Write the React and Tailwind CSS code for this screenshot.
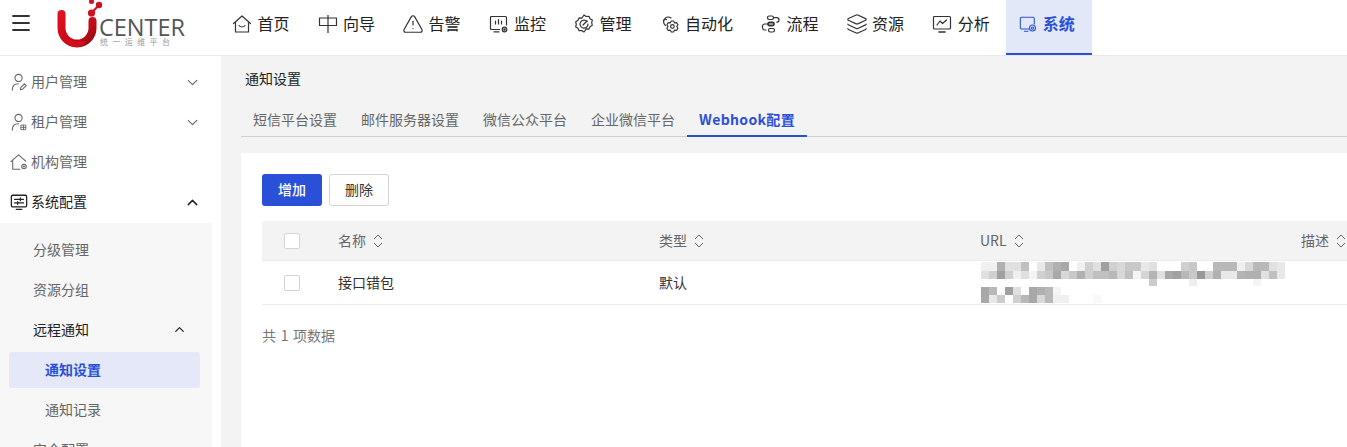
import { ChevronDown, ChevronUp, Menu, TriangleAlert, Layers } from 'lucide-react'

const cjk = '"Microsoft YaHei","Noto Sans CJK SC",sans-serif'

const Stroke = ({ children, className = '' }) => (
  <svg
    viewBox="0 0 20 20"
    fill="none"
    stroke="currentColor"
    strokeWidth="1.2"
    strokeLinecap="round"
    strokeLinejoin="round"
    className={className}
  >
    {children}
  </svg>
)

const HomeIcon = (p) => (
  <Stroke {...p}>
    <path d="M1.500 9.500 10 2l8.500 7.500" />
    <path d="M3.500 8.500V18h13V8.500" />
    <path d="M7 11.500c1.500 2 4.500 2 6 0" />
  </Stroke>
)
const GuideIcon = (p) => (
  <Stroke {...p}>
    <path d="M1.500 4h17v7.500h-17z" />
    <path d="M10 1.500V18.500" />
  </Stroke>
)
const MonitorIcon = (p) => (
  <Stroke {...p}>
    <path d="M10.500 15.500H2.500a1 1 0 0 1-1-1V3.500a1 1 0 0 1 1-1h14a1 1 0 0 1 1 1v7.500" />
    <path d="M6.500 10V7M9.500 10V5.500M12.500 10V7" />
    <path d="M5 17.800h5" />
    <circle cx="15.500" cy="15.500" r="2.300" />
    <circle cx="15.500" cy="15.500" r=".7" />
  </Stroke>
)
const ManageIcon = (p) => (
  <Stroke {...p}>
    <path d="M10 1.500l2.200 1.500 2.700-.2 1.100 2.400 2.300 1.400-.6 2.600.6 2.600-2.300 1.400-1.100 2.400-2.700-.2L10 18.500l-2.200-1.500-2.700.2L4 14.800l-2.300-1.400.6-2.600-.6-2.600L4 6.800l1.100-2.400 2.700.2z" transform="translate(0 -.5)" />
    <path d="M13 7.500A4 4 0 1 0 14 10" />
    <path d="M9 11l4-4" />
  </Stroke>
)
const AutoIcon = (p) => (
  <Stroke {...p}>
    <path d="M5.500 11.500A4.500 4.500 0 1 1 11 4" />
    <path d="M3.500 7a2 2 0 0 1 3-1.500" />
    <path d="M13.500 7l1 1.800 2.200-.1 1.200 2-1.100 1.800 1.100 1.800-1.200 2-2.200-.1-1 1.800h-2.200l-1-1.800-2.200.1-1.200-2 1.100-1.800-1.100-1.800 1.200-2 2.200.1 1-1.800z" />
    <circle cx="12.400" cy="12.500" r="1.800" />
  </Stroke>
)
const FlowIcon = (p) => (
  <Stroke {...p}>
    <rect x="6.500" y="2" width="6" height="3.500" rx="1.700" />
    <rect x="7" y="8.500" width="6" height="3" rx="1.500" strokeWidth="1.800" />
    <rect x="7.500" y="14.500" width="6" height="3.500" rx="1.700" />
    <path d="M13.500 3.700h2.300a2.200 2.200 0 0 1 0 4.400" />
    <path d="M6 10H3.800a2.300 2.300 0 0 0-2.300 2.300v1.500A2.300 2.300 0 0 0 3.800 16H5" />
  </Stroke>
)
const ChartIcon = (p) => (
  <Stroke {...p}>
    <rect x="1.500" y="2.500" width="17" height="12.500" rx="1" />
    <path d="M5 11l3-4 2.500 2.500L14.500 6" />
    <path d="M7 18h6" strokeWidth="1.600" />
  </Stroke>
)
const SystemIcon = (p) => (
  <Stroke {...p}>
    <path d="M11 15.500H3a1.500 1.500 0 0 1-1.500-1.500V4A1.500 1.500 0 0 1 3 2.500h12.500A1.500 1.500 0 0 1 17 4v6" />
    <path d="M6 18h4" />
    <circle cx="15" cy="14.500" r="3.300" />
    <circle cx="15" cy="14.500" r="1.200" />
  </Stroke>
)
const UserEdit = (p) => (
  <Stroke {...p}>
    <circle cx="9.500" cy="5.500" r="4" />
    <path d="M2.500 19c0-4.500 2.500-7 7-7" />
    <path d="M11.500 18.500l.5-2.500 4-4 2 2-4 4z" />
  </Stroke>
)
const UserTenant = (p) => (
  <Stroke {...p}>
    <circle cx="9.500" cy="5.500" r="4" />
    <path d="M2.500 19c0-4.500 2.500-7 7-7" />
    <path d="M12.500 13.500h5v5h-5zM15 13.500v5M12.500 16h5" strokeWidth="1" />
  </Stroke>
)
const OrgIcon = (p) => (
  <Stroke {...p}>
    <path d="M1 9.500 9.500 2l8 7" />
    <path d="M3 8.500V18h8" />
    <circle cx="15.500" cy="15" r="2.500" />
    <circle cx="15.500" cy="15" r=".6" />
  </Stroke>
)
const ConfigIcon = (p) => (
  <Stroke {...p}>
    <rect x="1.500" y="2.500" width="17" height="13" rx="1.500" strokeWidth="1.400" />
    <path d="M5 7h10M5 11h10" strokeWidth="1.400" />
    <path d="M11.500 5.500v3M8.500 9.500v3" strokeWidth="1.400" />
    <path d="M7 18.200h6" strokeWidth="1.400" />
  </Stroke>
)

const navItems = [
  { label: '首页', Icon: HomeIcon, size: 'w-[20px] h-[20px]' },
  { label: '向导', Icon: GuideIcon, size: 'w-[20px] h-[20px]' },
  { label: '告警', Icon: TriangleAlert, size: 'w-[22px] h-[22px] -mx-[1px]' },
  { label: '监控', Icon: MonitorIcon, size: 'w-[20px] h-[20px]' },
  { label: '管理', Icon: ManageIcon, size: 'w-[20px] h-[20px]' },
  { label: '自动化', Icon: AutoIcon, size: 'w-[20px] h-[20px]' },
  { label: '流程', Icon: FlowIcon, size: 'w-[20px] h-[20px]' },
  { label: '资源', Icon: Layers, size: 'w-[22px] h-[22px] -mx-[1px]' },
  { label: '分析', Icon: ChartIcon, size: 'w-[20px] h-[20px]' },
]

const tabs = ['短信平台设置', '邮件服务器设置', '微信公众平台', '企业微信平台']

// blurred-out url in the table, read off the screenshot cell by cell
const mosaic = [
  { y: 0, h: 9, cells: 'f0,f0,b0,e0,e0,c0,ff,e8,c0,b0,a8,ff,f0,d0,e0,a0,d0,d8,c8,c8,e8,e0,ff,ff,ff,d0,c8,ff,ff,b8,b8,b8,f0,d8,b8,b8,e0,e8' },
  { y: 9, h: 8, cells: 'e0,d0,a0,d0,f0,e0,f4,d0,c8,a8,d8,c8,b0,d0,c0,c0,b8,d8,c0,f4,d4,b4,e0,a8,a0,b8,c8,98,d0,b0,e8,e8,b4,b0,b0,e0,c0,e8' },
  { y: 17, h: 7, cells: 'ff,ff,ff,ff,ff,ff,ff,ff,ff,ff,ff,ff,ff,ff,ff,ff,ff,ff,ff,ff,ff,cc,ff,ff,ff,ff,ee,ff,ff,ff,ff,ff,ff,ff,f4' },
  { y: 25, h: 8, cells: 'a8,b8,ff,a0,e0,ff,a8,b0,b8,f4' },
  { y: 33, h: 8, cells: 'a8,e8,cc,ff,d0,b8,a8,d8,b8,f0,f0,ff,ff,ff,f8' },
]

const Mosaic = () => (
  <svg width="304" height="42" viewBox="0 0 304 42" className="block">
    {mosaic.map((row) =>
      row.cells.split(',').map((c, i) => (
        <rect key={`${row.y}-${i}`} x={i * 8} y={row.y} width="8" height={row.h} fill={`#${c}${c}${c}`} />
      ))
    )}
  </svg>
)

const Logo = () => (
  <div className="relative w-[136px] h-[48px] shrink-0">
    <svg viewBox="0 0 48 50" className="absolute left-0 top-0 w-[48px] h-[50px]">
      <defs>
        <linearGradient id="ug" x1="0" y1="0" x2="1" y2="1">
          <stop offset="0" stopColor="#e01020" />
          <stop offset="0.7" stopColor="#c00a16" />
          <stop offset="1" stopColor="#8d0a12" />
        </linearGradient>
      </defs>
      <path d="M4.500 14V28a15.500 15.500 0 0 0 31 0V21" fill="none" stroke="url(#ug)" strokeWidth="8" strokeLinecap="round" />
      <path d="M6 36c6 5 14 7 24 5-3 4-7 6-11 6-6 0-10-4-13-11z" fill="#d40e1c" />
      <circle cx="34.500" cy="13" r="3.600" fill="#cf1020" />
      <circle cx="42" cy="5" r="3.200" fill="#cf1020" />
      <circle cx="34.500" cy="1.500" r="2.500" fill="#cf1020" />
      <path d="M34.500 13l7.500-8" stroke="#cf1020" strokeWidth="2" />
    </svg>
    <span className="absolute left-[42px] top-[18px] text-[23.500px] leading-[18px] font-medium text-[#555] font-['Open_Sans',sans-serif]">
      CENTER
    </span>
    <span
      className="absolute left-[43px] top-[38px] text-[8px] leading-[8px] text-[#999] tracking-[4.400px] whitespace-nowrap"
      style={{ fontFamily: cjk }}
    >
      统一运维平台
    </span>
  </div>
)

const SortIcon = () => (
  <svg viewBox="0 0 10 14" className="w-[10px] h-[14px] text-[#666] ml-[7px]" fill="none" stroke="currentColor" strokeWidth="1">
    <path d="M1 5l4-4 4 4M1 9l4 4 4-4" />
  </svg>
)

const Checkbox = () => <div className="w-4 h-4 rounded-[2px] border border-[#d4d4d4] bg-white" />

const SideItem = ({ Icon, label, open, closed, active }) => (
  <div className="h-10 flex items-center pl-[10px] pr-[11px]">
    <Icon className={`w-[18px] h-[18px] ${active ? 'text-[#222]' : 'text-[#666]'}`} />
    <span className={`ml-[3px] pb-[2px] text-sm ${active ? 'text-[#222]' : 'text-[#666]'}`}>{label}</span>
    {closed && <ChevronDown className="w-[17px] h-[17px] ml-auto text-[#666]" strokeWidth={1.500} />}
    {open && <ChevronUp className="w-[17px] h-[17px] ml-auto text-[#222]" strokeWidth={2} />}
  </div>
)

export default function App() {
  return (
    <div className="w-[1347px] h-[447px] overflow-hidden bg-white flex flex-col" style={{ fontFamily: cjk }}>
      {/* top bar */}
      <header className="h-[56px] shrink-0 flex items-start border-b border-[#e8e8e8]">
        <Menu className="w-6 h-6 ml-[9px] mt-[11px] text-[#333] shrink-0" strokeWidth={1.800} />
        <div className="ml-6">
          <Logo />
        </div>
        <nav className="flex ml-[25px] h-[55px]">
          {navItems.map(({ label, Icon, size }) => (
            <div key={label} className="flex items-center h-[48px] px-[14px] gap-[5.500px] text-base text-[#222]">
              <Icon className={`${size} text-[#333]`} strokeWidth={1.300} />
              <span className="pb-[2px]">{label}</span>
            </div>
          ))}
          <div className="ml-[2px] w-[86px] h-[55px] pl-[13px] bg-[#e2e8f8] border-b-2 border-[#2b50d8] text-base font-semibold text-[#2b50d8]">
            <span className="flex items-center h-[48px] gap-[6px]">
              <SystemIcon className="w-[18px] h-[18px] text-[#2b50d8]" />
              <span className="pb-[2px]">系统</span>
            </span>
          </div>
        </nav>
      </header>

      <div className="flex flex-1 min-h-0">
        {/* side menu */}
        <aside className="w-[221px] shrink-0 bg-white overflow-hidden pt-[6px]">
          <div className="w-[212px]">
            <SideItem Icon={UserEdit} label="用户管理" closed />
            <SideItem Icon={UserTenant} label="租户管理" closed />
            <SideItem Icon={OrgIcon} label="机构管理" />
            <SideItem Icon={ConfigIcon} label="系统配置" open active />
            <div className="mt-[1px] bg-[#f7f7f7] pt-[6px] pb-4 text-sm text-[#666]">
              <div className="h-10 flex items-center pl-[33px]">分级管理</div>
              <div className="h-10 flex items-center pl-[33px]">资源分组</div>
              <div className="h-10 flex items-center pl-[33px] pr-[25px] text-[#222]">
                远程通知
                <ChevronUp className="w-[15px] h-[15px] ml-auto" strokeWidth={2} />
              </div>
              <div className="h-9 mt-[3px] mb-[1px] ml-[9px] mr-3 pb-[2px] flex items-center pl-[36px] rounded-[3px] bg-[#e4e8f8] font-semibold text-[#2b50d8]">
                通知设置
              </div>
              <div className="h-10 flex items-center pl-[45px]">通知记录</div>
              <div className="h-10 flex items-center pl-[33px]">安全配置</div>
            </div>
          </div>
        </aside>

        {/* content */}
        <main className="flex-1 min-w-0 bg-[#f3f3f3] pl-5 flex flex-col">
          <div className="h-[46px] flex items-center pl-1 pb-[2px] text-sm text-[#222]">通知设置</div>
          <div className="h-[35px] flex border-b border-[#cfcfcf] text-sm text-[#666]">
            {tabs.map((t) => (
              <div key={t} className="h-[35px] px-3 pb-[2px] flex items-center">{t}</div>
            ))}
            <div className="h-[35px] px-3 flex items-center border-b-2 border-[#2b50d8] font-bold tracking-[0.35px] text-[#2b50d8] whitespace-nowrap">
              Webhook配置
            </div>
          </div>
          <section className="mt-4 flex-1 bg-white pl-[21px] pt-[21px]">
            <div className="flex gap-[7px] text-sm">
              <button className="w-[60px] h-8 pb-[2px] rounded-[3px] bg-[#2b50d8] text-white font-medium">增加</button>
              <button className="w-[60px] h-8 pb-[2px] rounded-[3px] border border-[#d4d4d4] text-[#333] bg-white">删除</button>
            </div>
            <div className="mt-[15px] text-sm">
              <div className="h-10 flex items-center bg-[#f3f3f3] border-b border-[#ebebeb] text-[#666]">
                <div className="w-[76px] pl-[22px]"><Checkbox /></div>
                <div className="w-[321px] flex items-center"><span className="pb-[2px]">名称</span><SortIcon /></div>
                <div className="w-[321px] flex items-center"><span className="pb-[2px]">类型</span><SortIcon /></div>
                <div className="w-[321px] flex items-center"><span className="pb-[2px]">URL</span><SortIcon /></div>
                <div className="flex items-center whitespace-nowrap"><span className="pb-[2px]">描述</span><SortIcon /></div>
              </div>
              <div className="h-[44px] flex items-center border-b border-[#ebebeb] text-[#333]">
                <div className="w-[76px] pl-[22px]"><Checkbox /></div>
                <div className="w-[321px] pb-[2px]">接口错包</div>
                <div className="w-[321px] pb-[2px]">默认</div>
                <div className="w-[321px] h-[43px] pl-[1px] pt-[1px]"><Mosaic /></div>
              </div>
            </div>
            <div className="mt-[20px] text-sm text-[#777] [word-spacing:1.500px]">共 1 项数据</div>
          </section>
        </main>
      </div>
    </div>
  )
}
